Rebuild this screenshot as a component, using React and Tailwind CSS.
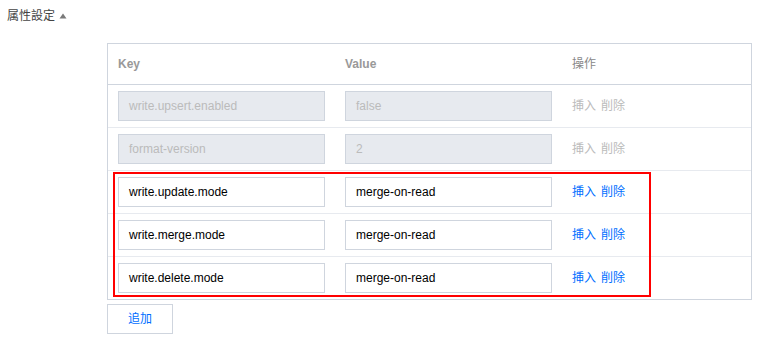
import React from 'react';

const rows = [
    { key: 'write.upsert.enabled', value: 'false', disabled: true },
    { key: 'format-version', value: '2', disabled: true },
    { key: 'write.update.mode', value: 'merge-on-read', disabled: false },
    { key: 'write.merge.mode', value: 'merge-on-read', disabled: false },
    { key: 'write.delete.mode', value: 'merge-on-read', disabled: false },
];

const Field = ({ text, disabled }) => (
    <div
        className={
            disabled
                ? 'h-[30px] w-[207px] border border-[#cfd5de] bg-[#e7eaef] px-[10px] flex items-center text-[12px] text-[#bbbbbb]'
                : 'h-[30px] w-[207px] border border-[#cfd5de] bg-white px-[10px] flex items-center text-[12px] text-[#000000]'
        }
    >
        {text}
    </div>
);

const App = () => {
    return (
        <div
            className="min-h-[340px] bg-white pl-[7px] pt-[7px]"
            style={{ fontFamily: '"Liberation Sans", "Noto Sans CJK SC", sans-serif' }}
        >
            <div className="flex items-center h-[17px] text-[12px] text-[#444444]">
                <span>属性設定</span>
                {/* caret */}
                <svg className="ml-[4px]" width="8" height="6" viewBox="0 0 8 6">
                    <path d="M4 0.5 L7.5 5.5 L0.5 5.5 Z" fill="#7a7a7a" />
                </svg>
            </div>

            <div className="ml-[100px] mt-[19px] w-[645px]">
                <div className="relative border border-[#cfd5de]">
                    {/* header */}
                    <div className="grid grid-cols-[227px_227px_1fr] h-[41px] border-b border-[#cfd5de] text-[12px] font-bold text-[#999999]">
                        <div className="flex items-center px-[10px]">Key</div>
                        <div className="flex items-center px-[10px]">Value</div>
                        <div className="flex items-center px-[10px] font-normal text-[#888888]">操作</div>
                    </div>

                    {rows.map((row, i) => (
                        <div
                            key={row.key}
                            className={
                                i < rows.length - 1
                                    ? 'grid grid-cols-[227px_227px_1fr] h-[43px] border-b border-[#e7eaef]'
                                    : 'grid grid-cols-[227px_227px_1fr] h-[42px]'
                            }
                        >
                            <div className="flex items-center px-[10px]">
                                <Field text={row.key} disabled={row.disabled} />
                            </div>
                            <div className="flex items-center px-[10px]">
                                <Field text={row.value} disabled={row.disabled} />
                            </div>
                            <div
                                className={
                                    row.disabled
                                        ? 'flex items-center gap-[5px] px-[10px] text-[12px] text-[#bbbbbb]'
                                        : 'flex items-center gap-[5px] px-[10px] text-[12px] text-[#006eff]'
                                }
                            >
                                <span>挿入</span>
                                <span>削除</span>
                            </div>
                        </div>
                    ))}

                    {/* annotation box */}
                    <div className="absolute left-[5px] top-[128px] w-[538px] h-[125px] border-2 border-[#ff0000] pointer-events-none"></div>
                </div>

                <button className="mt-[4px] h-[30px] w-[66px] border border-[#cfd5de] bg-white text-[12px] text-[#006eff]">
                    追加
                </button>
            </div>
        </div>
    );
};

export default App;
